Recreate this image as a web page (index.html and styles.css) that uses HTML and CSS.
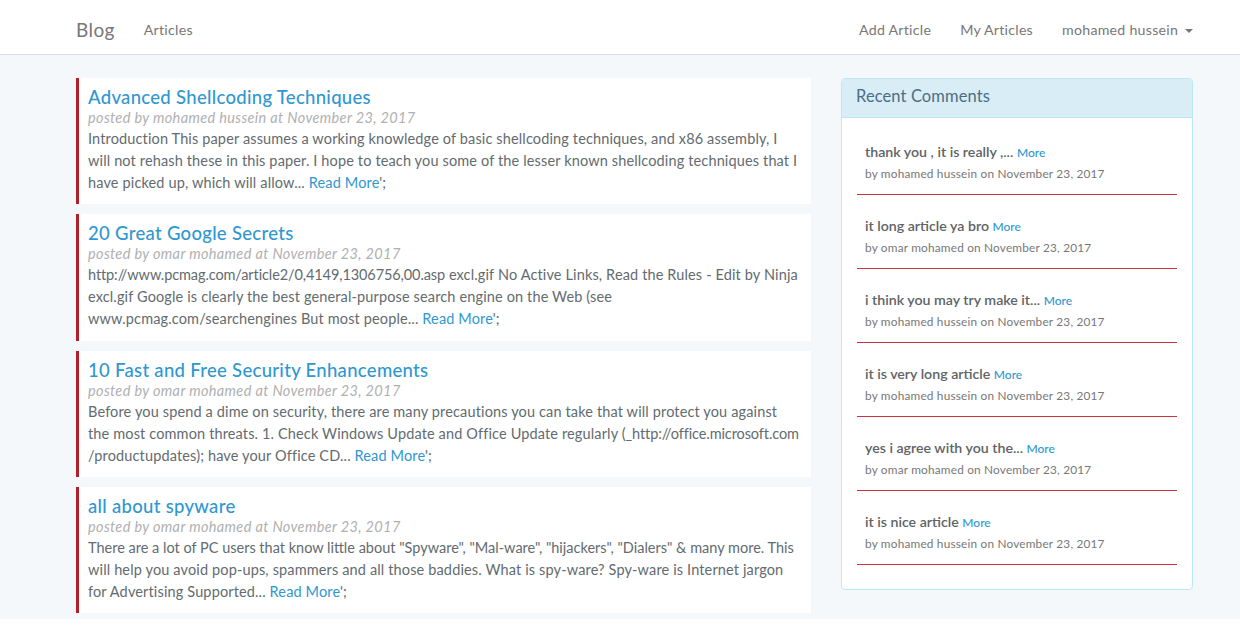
FILE: index.html
```html
<!DOCTYPE html>
<html>
<head>
<meta charset="utf-8">
<link rel="stylesheet" href="styles.css">
</head>
<body>
<div class="page">
  <nav class="navbar">
    <div class="nav-left">
      <span class="brand">Blog</span>
      <span class="nav-link">Articles</span>
    </div>
    <div class="nav-right">
      <span class="nav-link">Add Article</span>
      <span class="nav-link">My Articles</span>
      <span class="nav-link user">mohamed hussein <span class="caret"></span></span>
    </div>
  </nav>
  <main class="main">
    <section class="articles">
      <article class="card">
        <h3 class="card-title">Advanced Shellcoding Techniques</h3>
        <div class="meta">posted by mohamed hussein at November 23, 2017</div>
        <p class="excerpt">Introduction This paper assumes a working knowledge of basic shellcoding techniques, and x86 assembly, I<br>will not rehash these in this paper. I hope to teach you some of the lesser known shellcoding techniques that I<br>have picked up, which will allow... <span class="link">Read More</span>';</p>
      </article>
      <article class="card">
        <h3 class="card-title">20 Great Google Secrets</h3>
        <div class="meta">posted by omar mohamed at November 23, 2017</div>
        <p class="excerpt"><span class="url">http://www.pcmag.com/article2/0,4149,1306756,00.asp</span> excl.gif No Active Links, Read the Rules - Edit by Ninja<br>excl.gif Google is clearly the best general-purpose search engine on the Web (see<br>www.pcmag.com/searchengines But most people... <span class="link">Read More</span>';</p>
      </article>
      <article class="card">
        <h3 class="card-title">10 Fast and Free Security Enhancements</h3>
        <div class="meta">posted by omar mohamed at November 23, 2017</div>
        <p class="excerpt">Before you spend a dime on security, there are many precautions you can take that will protect you against<br>the most common threats. 1. Check Windows Update and Office Update regularly <span class="url">(_http://office.microsoft.com</span><br>/productupdates); have your Office CD... <span class="link">Read More</span>';</p>
      </article>
      <article class="card">
        <h3 class="card-title">all about spyware</h3>
        <div class="meta">posted by omar mohamed at November 23, 2017</div>
        <p class="excerpt"><span class="tight">There are a lot of PC users that know little about "Spyware", "Mal-ware", "hijackers", "Dialers" &amp; many more. This</span><br>will help you avoid pop-ups, spammers and all those baddies. What is spy-ware? Spy-ware is Internet jargon<br>for Advertising Supported... <span class="link">Read More</span>';</p>
      </article>
    </section>
    <aside class="panel">
      <div class="panel-heading">Recent Comments</div>
      <div class="panel-body">
        <div class="comment">
          <div class="comment-text">thank you , it is really ,... <span class="more">More</span></div>
          <div class="comment-meta">by mohamed hussein on November 23, 2017</div>
        </div>
        <div class="comment">
          <div class="comment-text">it long article ya bro <span class="more">More</span></div>
          <div class="comment-meta">by omar mohamed on November 23, 2017</div>
        </div>
        <div class="comment">
          <div class="comment-text">i think you may try make it... <span class="more">More</span></div>
          <div class="comment-meta">by mohamed hussein on November 23, 2017</div>
        </div>
        <div class="comment">
          <div class="comment-text">it is very long article <span class="more">More</span></div>
          <div class="comment-meta">by mohamed hussein on November 23, 2017</div>
        </div>
        <div class="comment">
          <div class="comment-text">yes i agree with you the... <span class="more">More</span></div>
          <div class="comment-meta">by omar mohamed on November 23, 2017</div>
        </div>
        <div class="comment">
          <div class="comment-text">it is nice article <span class="more">More</span></div>
          <div class="comment-meta">by mohamed hussein on November 23, 2017</div>
        </div>
      </div>
    </aside>
  </main>
</div>
</body>
</html>
```

FILE: styles.css
```css
html, body {
  margin: 0;
  padding: 0;
  background: #ffffff;
}
body {
  font-family: "Lato", "Open Sans", sans-serif;
  color: #636b6f;
  font-size: 14.5px;
  letter-spacing: 0.2px;
  line-height: 22px;
}
.page {
  background: #f5f8fa;
}
.navbar {
  box-sizing: border-box;
  height: 55px;
  padding: 5px 47px 0 76px;
  background: #ffffff;
  border-bottom: 1px solid #d3e0e9;
  display: flex;
  align-items: center;
  justify-content: space-between;
}
.nav-left, .nav-right {
  display: flex;
  align-items: center;
}
.brand {
  font-size: 19px;
  letter-spacing: 0.4px;
  color: #777;
  margin-right: 29px;
}
.nav-link {
  font-size: 14.2px;
  letter-spacing: 0.25px;
  color: #777;
}
.nav-right .nav-link {
  margin-left: 29px;
}
.caret {
  display: inline-block;
  width: 0;
  height: 0;
  margin-left: 3px;
  vertical-align: middle;
  border-top: 4px solid #777;
  border-left: 4px solid transparent;
  border-right: 4px solid transparent;
}
.main {
  display: grid;
  grid-template-columns: 735px 352px;
  column-gap: 30px;
  align-items: start;
  padding: 23px 47px 6px 76px;
}
.articles {
  display: flex;
  flex-direction: column;
  gap: 10px;
}
.card {
  background: #ffffff;
  border-left: 3px solid #b0202a;
  padding: 8px 8px 10px 9px;
  height: 108.3px;
}
.card-title {
  margin: 0;
  font-size: 18.5px;
  letter-spacing: 0.3px;
  line-height: 22px;
  font-weight: 500;
  color: #3097d1;
}
.meta {
  font-style: italic;
  color: #b0b0b0;
  letter-spacing: 0.35px;
  line-height: 20px;
}
.excerpt {
  margin: 0;
  line-height: 22px;
  letter-spacing: 0.14px;
  white-space: nowrap;
}
.url {
  letter-spacing: -0.1px;
}
.tight {
  letter-spacing: 0px;
}
.link {
  color: #3097d1;
}
.panel {
  background: #ffffff;
  border: 1px solid #bce8f1;
  border-radius: 4px;
}
.panel-heading {
  background: #d9edf7;
  color: #4a6f85;
  font-size: 16.5px;
  letter-spacing: 0.1px;
  height: 38px;
  line-height: 35px;
  padding: 0 14px;
  border-bottom: 1px solid #bce8f1;
  border-radius: 3px 3px 0 0;
}
.panel-body {
  padding: 14px 15px 24px;
}
.comment {
  padding: 10px 8px 9px;
  border-bottom: 1px solid #c9343c;
  margin-bottom: 11px;
}
.comment:last-child {
  margin-bottom: 0;
}
.comment-text {
  font-size: 14.2px;
  letter-spacing: 0;
  font-weight: 600;
  line-height: 20px;
  color: #5e6366;
}
.more {
  font-size: 12px;
  font-weight: 500;
  color: #3097d1;
}
.comment-meta {
  font-size: 11.8px;
  letter-spacing: 0.2px;
  line-height: 22px;
  color: #777;
}
```
